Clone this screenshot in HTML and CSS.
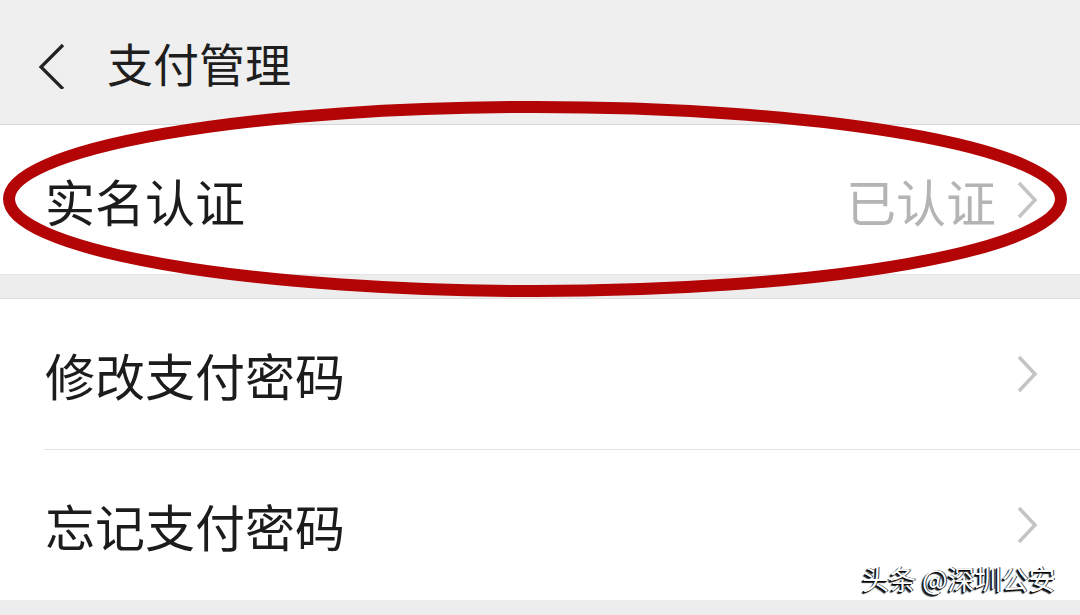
FILE: index.html
```html
<!DOCTYPE html>
<html lang="zh-CN">
<head>
  <meta charset="UTF-8">
  <title>支付管理</title>
  <meta name="viewport" content="width=device-width, initial-scale=1.0">
  <link rel="stylesheet" href="styles.css">
</head>
<body>
  <div class="screen">
    <header class="topbar">
      <svg class="back" width="30" height="50" viewBox="0 0 30 50">
        <polyline points="25,6 3,28 25,50" fill="none" stroke="#222" stroke-width="3.2" stroke-linejoin="miter"/>
      </svg>
      <h1>支付管理</h1>
    </header>

    <section class="group">
      <div class="row">
        <span class="label">实名认证</span>
        <span class="value">已认证</span>
        <svg class="arrow" width="22" height="40" viewBox="0 0 22 40">
          <polyline points="3,3 19,20 3,37" fill="none" stroke="#c4c4c4" stroke-width="3.5"/>
        </svg>
      </div>
    </section>

    <div class="spacer"></div>

    <section class="group">
      <div class="row">
        <span class="label">修改支付密码</span>
        <svg class="arrow" width="22" height="40" viewBox="0 0 22 40">
          <polyline points="3,3 19,20 3,37" fill="none" stroke="#c4c4c4" stroke-width="3.5"/>
        </svg>
      </div>
      <div class="row">
        <span class="label">忘记支付密码</span>
        <svg class="arrow" width="22" height="40" viewBox="0 0 22 40">
          <polyline points="3,3 19,20 3,37" fill="none" stroke="#c4c4c4" stroke-width="3.5"/>
        </svg>
      </div>
    </section>

    <div class="footer"></div>

    <!-- red marker circle drawn over the first row -->
    <svg class="mark" width="1080" height="320" viewBox="0 0 1080 320">
      <ellipse cx="535" cy="199" rx="526" ry="92" fill="none" stroke="#b30406" stroke-width="12"/>
    </svg>

    <div class="watermark">头条 @深圳公安</div>
  </div>
</body>
</html>
```

FILE: styles.css
```css
body {
  margin: 0;
  padding: 0;
  background-color: #ededed;
  font-family: "Noto Sans CJK SC", "Noto Sans", sans-serif;
  color: #1c1c1c;
}

.screen {
  position: relative;
  width: 1080px;
  height: 615px;
  overflow: hidden;
  background-color: #ededed;
}

.topbar {
  height: 124px;
  display: flex;
  align-items: center;
  padding-left: 38px;
  background-color: #efefef;
  border-bottom: 1px solid #d8d8d8;
  box-sizing: content-box;
}

.back {
  margin-top: 4px;
}

.topbar h1 {
  margin: 0 0 0 39px;
  font-size: 46px;
  font-weight: normal;
  color: #1e1e1e;
  line-height: 1;
}

.group {
  background-color: #fff;
}

.row {
  display: flex;
  align-items: center;
  height: 149px;
  padding: 0 42px 0 45px;
}

.group .row + .row {
  height: 150px;
  border-top: 1px solid #e2e2e2;
  margin-left: 44px;
  padding-left: 1px;
}

.group + .spacer + .group .row:first-child {
  height: 150px;
}

.label {
  font-size: 50px;
  line-height: 1;
  flex: 1;
}

.value {
  font-size: 50px;
  line-height: 1;
  color: #b4b4b4;
  margin-right: 20px;
}

.arrow {
  display: block;
}

.spacer {
  height: 23px;
  border-top: 1px solid #e4e4e4;
  border-bottom: 1px solid #e0e0e0;
  background-color: #ededed;
}

.footer {
  height: 15px;
  background-color: #ededed;
}

.mark {
  position: absolute;
  left: 0;
  top: 0;
  pointer-events: none;
}

.watermark {
  position: absolute;
  left: 862px;
  top: 565px;
  font-size: 27px;
  line-height: 1;
  color: #fff;
  text-shadow: -1px 1px 0 #000, -2px 2px 1px #222, 1px 0 0 #333;
}
```
